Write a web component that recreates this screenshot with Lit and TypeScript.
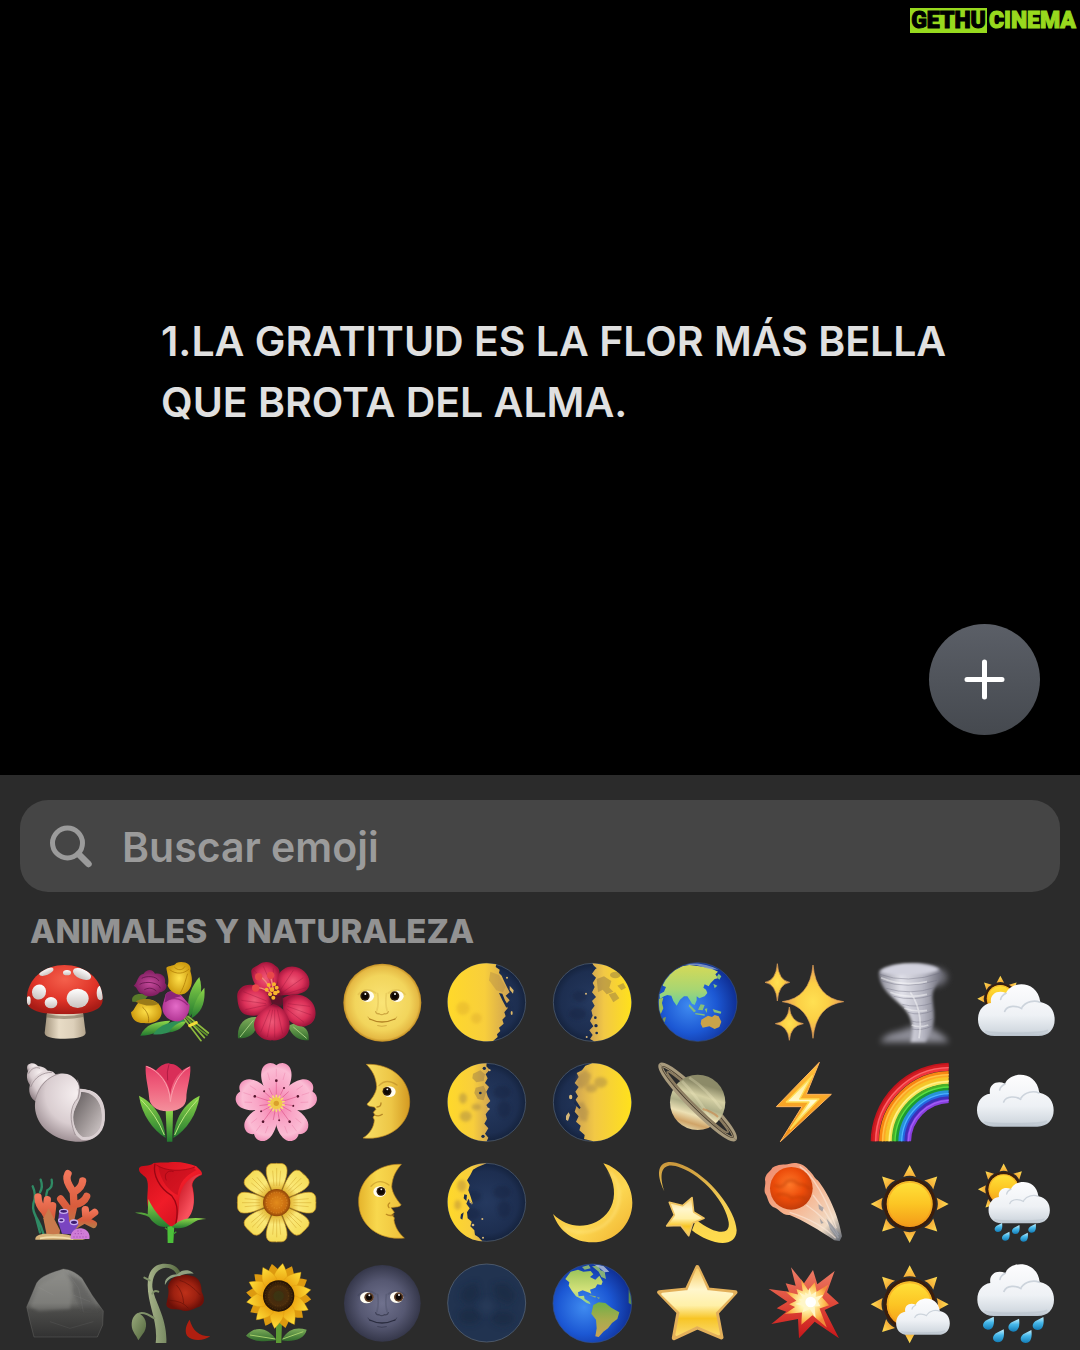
import { LitElement, html, svg, css } from "lit";
import { customElement } from "lit/decorators.js";

type Art = ReturnType<typeof svg>;
interface Emoji {
  name: string;
  art: Art;
}

/* ---------- shared gradients ---------- */

const linear = (id: string, stops: [number, string][], x2 = 0, y2 = 1) => svg`
  <linearGradient id=${id} x1="0" y1="0" x2=${x2} y2=${y2}>
    ${stops.map(([o, c]) => svg`<stop offset=${o} stop-color=${c}></stop>`)}
  </linearGradient>`;

const radial = (id: string, stops: [number, string][], cx = 0.5, cy = 0.5, r = 0.5) => svg`
  <radialGradient id=${id} cx=${cx} cy=${cy} r=${r}>
    ${stops.map(([o, c]) => svg`<stop offset=${o} stop-color=${c}></stop>`)}
  </radialGradient>`;

const defs = svg`
  ${radial("cap", [[0, "#f4604c"], [0.6, "#e03428"], [1, "#a81c16"]], 0.5, 0.3, 0.65)}
  ${linear("stem", [[0, "#a4957e"], [0.35, "#e8dcc6"], [0.7, "#ddd0ba"], [1, "#b3a48c"]], 1, 0)}
  ${linear("spot", [[0, "#ffffff"], [1, "#c9c2bf"]])}
  ${radial("plum", [[0, "#c64a9c"], [1, "#7d1c5e"]])}
  ${radial("pinkRose", [[0, "#e46cc8"], [1, "#b23694"]])}
  ${radial("goldRose", [[0, "#ffe14a"], [1, "#cf9c10"]])}
  ${linear("leaf", [[0, "#8fd84a"], [1, "#237a30"]])}
  ${linear("leafDark", [[0, "#7fae5a"], [1, "#2f6a2c"]])}
  ${linear("leafPale", [[0, "#9aaa7c"], [1, "#51653c"]], 1, 1)}
  ${radial("hib", [[0, "#ef5a78"], [0.6, "#dc3159"], [1, "#a3153c"]])}
  ${radial("face", [[0, "#fae476"], [0.7, "#f2d55c"], [0.93, "#e5b944"], [1, "#c08c24"]])}
  ${linear("faceEdge", [[0, "#f8df66"], [0.6, "#edc646"], [1, "#d49a22"]], 1, 0)}
  ${linear("faceEdgeL", [[0, "#e5b42c"], [0.4, "#f8d84e"], [1, "#eec03a"]], 1, 0)}
  ${radial("night", [[0, "#25395f"], [0.8, "#1d2e50"], [1, "#15233e"]])}
  ${linear("litL", [[0, "#ffd92a"], [0.6, "#f8ce3c"], [1, "#cfa353"]], 1, 0)}
  ${linear("litR", [[0, "#cfa353"], [0.35, "#f2c845"], [1, "#ffe11c"]], 1, 0)}
  ${radial("sea", [[0, "#3f8bf0"], [0.55, "#1c58d4"], [1, "#0e2c90"]], 0.4, 0.55, 0.62)}
  ${linear("asia", [[0, "#d5d957"], [0.6, "#a8d672"], [1, "#6ccf9a"]])}
  ${linear("america", [[0, "#9cc45a"], [0.6, "#d4e27a"], [1, "#8fd08a"]])}
  ${linear("south", [[0, "#6fae48"], [0.5, "#a8ac4c"], [1, "#c8a258"]])}
  ${radial("spark", [[0, "#ffe052"], [0.5, "#fbcf45"], [1, "#e79a5a"]])}
  ${linear("twister", [[0, "#8a8a96"], [0.35, "#e2e2ea"], [0.7, "#b8b8c4"], [1, "#6e6e7a"]], 1, 0)}
  ${linear("cloud", [[0, "#fdfdfe"], [0.6, "#eef1f5"], [0.9, "#d3dae1"], [1, "#b8c2cc"]])}
  ${linear("sun", [[0, "#ffe23a"], [0.5, "#fcc524"], [1, "#f39a18"]])}
  ${linear("ray", [[0, "#ffdf55"], [1, "#f4a935"]])}
  ${linear("drop", [[0, "#c8f2ff"], [0.45, "#46b8ea"], [1, "#127cb6"]])}
  ${radial("shell", [[0, "#f6eff0"], [0.6, "#d9cdd0"], [1, "#94858a"]], 0.6, 0.3, 0.75)}
  ${linear("shellIn", [[0, "#5c5657"], [0.6, "#a49c9c"], [1, "#d5cdcd"]], 1, 1)}
  ${linear("tulip", [[0, "#e63c66"], [0.5, "#f0647f"], [1, "#f4909c"]])}
  ${radial("cherry", [[0, "#f57fae"], [0.4, "#f9a5c6"], [0.8, "#fbbcd4"], [1, "#f190b8"]], 0.5, 0.9, 0.95)}
  ${linear("saturn", [[0, "#8c8a68"], [0.2, "#d5d0a4"], [0.38, "#b0b089"], [0.55, "#ece0b4"], [0.7, "#d0a468"], [0.82, "#e0d3a6"], [1, "#8a7a58"]], -0.3, 1)}
  ${linear("bolt", [[0, "#ffc23c"], [1, "#f08a12"]])}
  ${linear("boltIn", [[0, "#ffe680"], [0.5, "#fffbd2"], [1, "#ffd84a"]])}
  ${linear("coral", [[0, "#f2765a"], [0.6, "#d85c3c"], [1, "#b67a48"]])}
  ${linear("rose", [[0, "#c80c18"], [0.5, "#f01c28"], [1, "#c00a1c"]], 1, 1)}
  ${linear("roseR", [[0, "#b80614"], [1, "#f8505c"]], 0.6, 0.6)}
  ${linear("daisy", [[0, "#f5dc58"], [0.6, "#fbe978"], [1, "#d8a21c"]])}
  ${radial("daisyEye", [[0, "#e28b1c"], [0.7, "#c96d10"], [1, "#8f4608"]])}
  ${radial("seeds", [[0, "#3a2a10"], [0.6, "#4a2c0c"], [1, "#231204"]])}
  ${linear("sunPetal", [[0, "#ffe03a"], [1, "#e89c0c"]])}
  ${linear("rock", [[0, "#8c8c88"], [0.5, "#6e6e6b"], [0.6, "#4c4c4a"], [1, "#323232"]])}
  ${linear("wilt", [[0, "#a8b48a"], [0.5, "#7f9068"], [1, "#56683e"]], 1, 0)}
  ${radial("dead", [[0, "#bd3019"], [0.6, "#9e2110"], [1, "#6c1008"]])}
  ${radial("dusk", [[0, "#70728e"], [0.6, "#565872"], [1, "#35374a"]])}
  ${linear("crescent", [[0, "#f2b62e"], [0.6, "#fcd752"], [1, "#f0b02c"]], 1, 1)}
  ${radial("ember", [[0, "#ff7a2a"], [0.6, "#ec4c0a"], [1, "#c23c0a"]], 0.45, 0.4, 0.6)}
  ${linear("tail", [[0, "#ee8a6e"], [0.45, "#f6b08a"], [0.8, "#f0dcc6"], [1, "#5c6470"]], 1, 1)}
  ${linear("star", [[0, "#f8cf6c"], [0.3, "#fff6cc"], [0.55, "#fff0a8"], [0.75, "#f7c526"], [1, "#fbd96a"]])}
  ${linear("swoosh", [[0, "#c9963c"], [0.5, "#f5cf55"], [1, "#ffdc4c"]])}
  ${linear("blast", [[0, "#ec7f68"], [0.5, "#e04a3a"], [1, "#c8161a"]])}
  ${radial("blastIn", [[0, "#ffffff"], [0.35, "#fff3a8"], [0.8, "#fdb94e"], [1, "#f08a3a"]])}
  <filter id="soft" x="-20%" y="-20%" width="140%" height="140%"><feGaussianBlur stdDeviation="4"></feGaussianBlur></filter>
  <filter id="haze" x="-40%" y="-40%" width="180%" height="180%"><feGaussianBlur stdDeviation="9"></feGaussianBlur></filter>
`;

/* ---------- reusable pieces ---------- */

const spin = (n: number, cx: number, cy: number, part: Art, from = 0) =>
  Array.from({ length: n }, (_, i) => svg`
    <g transform="translate(${cx} ${cy}) rotate(${from + (i * 360) / n})">${part}</g>`);

const cloud = (dx: number, dy: number, s = 1) => svg`
  <g transform="translate(${dx} ${dy}) scale(${s})">
    <path fill="url(#cloud)" d="M402 515C368 515 352 491 352 466C352 438 368 419 391 416C386 388 412 375 436 386C452 348 531 346 539 413C570 419 582 441 582 466C582 494 564 515 533 515Z"/>
    <g fill="none" stroke="#c0c9d3" stroke-width="5" stroke-linecap="round" opacity=".75">
      <path d="M432 441C440 421 470 424 483 433"/><path d="M484 429C496 411 522 406 538 414"/><path d="M436 387C426 392 421 399 420 405"/>
    </g>
    <path d="M374 500C395 509 540 509 562 498" fill="none" stroke="#b4bec9" stroke-width="5" opacity=".4"/>
  </g>`;

const sun = (cx: number, cy: number, s = 1) => svg`
  <g transform="translate(${cx} ${cy}) scale(${s})">
    <circle r="79" fill="#3a1d0d"/>
    ${spin(8, 0, 0, svg`<path d="M-19 -81Q0 -88 19 -81L0 -117Z" fill="url(#ray)"/>`)}
    <circle r="69" fill="url(#sun)"/>
    <circle r="66" fill="none" stroke="#f2961c" stroke-width="5" opacity=".55"/>
  </g>`;

const drop = (x: number, y: number, s = 1) => svg`
  <path transform="translate(${x} ${y}) scale(${s})" fill="url(#drop)" d="M17 -21C20 0 17 20 -2 20C-22 18 -21 -4 -3 -11Z"/>`;

const eye = (x: number, y: number, px: number, r = 1, iris = "#2a1808") => svg`
  <ellipse cx=${x} cy=${y} rx=${20 * r} ry=${17 * r} fill="#fffdf2"/>
  <circle cx=${x + px} cy=${y - 1} r=${14 * r} fill=${iris}/>
  <circle cx=${x + px} cy=${y - 1} r=${9 * r} fill="#0c0603"/>
  <circle cx=${x + px + 1} cy=${y - 7} r=${3 * r} fill="#fff"/>`;

const smile = (x: number, y: number, line: string) => svg`
  <g fill="none" stroke=${line} stroke-linecap="round">
    <path stroke-width="4" opacity=".85" d="M${x - 36} ${y + 48}Q${x} ${y + 66} ${x + 40} ${y + 48}"/>
    <path stroke-width="3" opacity=".45" d="M${x - 41} ${y + 42}Q${x - 39} ${y + 48} ${x - 34} ${y + 50}M${x + 45} ${y + 42}Q${x + 43} ${y + 48} ${x + 38} ${y + 50}M${x - 12} ${y + 68}Q${x} ${y + 72} ${x + 14} ${y + 68}"/>
    <path stroke-width="4" opacity=".5" d="M${x - 18} ${y + 26}Q${x - 16} ${y + 34} ${x - 8} ${y + 32}Q${x} ${y + 38} ${x + 8} ${y + 32}Q${x + 18} ${y + 34} ${x + 20} ${y + 26}"/>
    <path stroke-width="5" opacity=".16" d="M${x - 12} ${y - 28}Q${x - 8} ${y} ${x - 14} ${y + 22}M${x + 14} ${y - 28}Q${x + 10} ${y} ${x + 16} ${y + 22}M${x - 70} ${y - 26}Q${x - 46} ${y - 50} ${x - 18} ${y - 30}M${x + 20} ${y - 30}Q${x + 46} ${y - 50} ${x + 70} ${y - 26}"/>
  </g>`;

const moon = (cx: number, cy: number, lit: string, fill: string, marks: Art) => svg`
  <circle cx=${cx} cy=${cy} r="117" fill="url(#night)" stroke="#53647a" stroke-width="2"/>
  <g fill="#16243f" opacity=".4" filter="url(#soft)">
    <ellipse cx=${cx - 38} cy=${cy - 18} rx="22" ry="17"/><ellipse cx=${cx + 46} cy=${cy - 30} rx="26" ry="20"/>
    <ellipse cx=${cx + 52} cy=${cy + 20} rx="20" ry="26"/><ellipse cx=${cx - 44} cy=${cy + 34} rx="26" ry="18"/>
  </g>
  <path d=${lit} fill="url(#${fill})"/>
  ${marks}`;

const sparkle = (cx: number, cy: number, rx: number, ry: number) => {
  const q = 0.1;
  return svg`<path fill="url(#spark)" d="M${cx} ${cy - ry}Q${cx + rx * q} ${cy - ry * q} ${cx + rx} ${cy}Q${cx + rx * q} ${cy + ry * q} ${cx} ${cy + ry}Q${cx - rx * q} ${cy + ry * q} ${cx - rx} ${cy}Q${cx - rx * q} ${cy - ry * q} ${cx} ${cy - ry}Z" stroke="#dfa058" stroke-width="2" stroke-linejoin="round"/>`;
};

/* ---------- the drawings, row by row ---------- */

const mushroom = svg`
  <path d="M112 165L104 233Q104 251 165 251Q228 251 227 233L218 165Z" fill="url(#stem)"/>
  <path d="M109 176Q165 190 221 176L220 186Q165 198 108 187Z" fill="#6e5f4a" opacity=".5"/>
  <clipPath id="capClip"><path d="M50 136C50 66 108 30 163 30C222 30 279 68 278 136C276 168 236 178 165 178C90 178 52 168 50 136Z"/></clipPath>
  <g clip-path="url(#capClip)">
    <rect x="45" y="25" width="240" height="160" fill="url(#cap)"/>
    <g fill="url(#spot)">
      <ellipse cx="109" cy="50" rx="23" ry="10" transform="rotate(-22 109 50)"/><ellipse cx="171" cy="53" rx="12" ry="8"/>
      <ellipse cx="216" cy="57" rx="29" ry="15" transform="rotate(24 216 57)"/><ellipse cx="87" cy="111" rx="21" ry="23" transform="rotate(20 87 111)"/>
      <ellipse cx="123" cy="143" rx="19" ry="17"/><ellipse cx="203" cy="130" rx="33" ry="29"/>
      <ellipse cx="271" cy="114" rx="11" ry="22"/><ellipse cx="56" cy="137" rx="6" ry="13"/>
    </g>
  </g>`;

const bouquet = svg`
  <g fill="url(#leaf)">
    <path d="M536 172C530 125 548 92 569 66C582 106 572 146 540 186Z"/><path d="M545 190C550 150 564 122 584 98C588 142 576 172 545 190Z"/>
    <path d="M392 242C406 208 440 198 482 197C462 226 428 242 392 242Z"/><path d="M430 238C448 208 490 198 528 192C512 222 472 242 430 238Z" fill="#2f8f56"/>
    <path d="M368 140C362 118 390 112 415 122L400 142Z" fill="#5a7a2a"/><path d="M478 232C490 210 510 200 530 198C520 216 505 230 478 232Z"/>
  </g>
  <g stroke="#8dbb3e" stroke-width="5" fill="none" stroke-linecap="round">
    <path d="M520 186L574 257"/><path d="M528 186L584 248"/><path d="M535 184L596 234"/><path d="M524 180Q550 210 592 240" stroke="#5d9429"/>
  </g>
  <path d="M540 212L560 203" stroke="#f3dc38" stroke-width="9" stroke-linecap="round"/>
  <path d="M468 118C480 100 500 112 516 122L540 150C540 180 522 202 498 199C470 196 452 172 460 146Z" fill="url(#pinkRose)"/>
  <path d="M466 140C480 128 510 124 534 150" stroke="#8a1d70" stroke-width="4" fill="none" opacity=".7"/>
  <path d="M468 118C480 104 500 112 514 124C498 128 480 132 466 142Z" fill="#8a2478"/>
  <path d="M372 92C384 84 382 60 402 56C412 40 430 42 436 56C456 52 470 66 466 84C478 96 464 110 450 112C440 126 408 128 400 116C384 118 386 98 372 92Z" fill="url(#plum)"/>
  <path d="M396 70C410 62 440 62 448 78M390 88C410 76 450 84 452 100M404 104C420 96 430 100 440 108" stroke="#551040" stroke-width="3" fill="none" opacity=".7"/>
  <path d="M470 38C480 30 494 34 500 24C520 16 548 26 542 48C550 74 550 98 528 114C508 126 482 112 474 92C480 74 472 56 470 38Z" fill="url(#goldRose)"/>
  <path d="M480 44C500 60 524 56 538 42M494 36C504 48 520 46 526 34M512 114C526 90 528 72 534 56" stroke="#b07c06" stroke-width="3" fill="none" opacity=".75"/>
  <path d="M364 172C376 166 378 144 396 136C420 126 454 140 456 168C458 196 430 208 404 204C382 206 366 194 364 172Z" fill="url(#goldRose)"/>
  <path d="M378 140C392 128 424 128 448 146C424 156 402 152 378 140Z" fill="#9a7a18"/>
  <path d="M398 156C412 168 420 186 416 202" stroke="#9a6c08" stroke-width="3" fill="none" opacity=".7"/>`;

const hibiscus = svg`
  <path d="M684 250C680 208 704 184 740 186C744 218 736 250 684 250Z" fill="url(#leafDark)"/><path d="M896 256C898 226 888 212 850 206L834 212C846 246 866 256 896 256Z" fill="url(#leafDark)"/>
  <path d="M690 246L730 196M890 250L850 216" stroke="#a6d080" stroke-width="3"/>
  <g fill="url(#hib)">
    <path d="M724 52C722 36 742 34 748 28C764 16 786 22 796 32C812 40 810 60 806 72L790 118C760 126 726 92 724 52Z"/>
    <path d="M804 62C814 40 838 30 858 36C884 42 902 66 898 90C894 112 866 120 836 120L798 122Z"/>
    <path d="M682 130C678 104 700 86 728 90C760 94 778 120 786 146C764 176 738 188 712 180C690 176 684 156 682 130Z"/>
    <path d="M818 130C842 112 886 114 906 142C924 166 920 204 890 212C866 222 834 202 820 172Z"/>
    <path d="M790 146C820 154 844 188 838 220C834 246 812 258 786 256C758 258 732 238 732 208C734 178 764 160 790 146Z"/>
  </g>
  <path d="M788 92C810 98 826 128 818 150C806 158 786 154 778 140Z" fill="#6d0e2a" opacity=".8" filter="url(#soft)"/>
  <g fill="none" stroke="#8d1236" stroke-width="2" opacity=".5">
    <path d="M700 110L770 138M694 136L768 146M706 164L770 150M730 44L778 92M760 34L784 88M790 40L790 84M850 46L812 104M880 68L818 112M888 98L824 118M900 154L834 146M904 180L832 154M882 202L830 162M752 232L780 164M772 246L788 164M794 248L794 164M818 236L802 164"/>
  </g>
  <path d="M746 62Q770 76 784 108M738 98Q762 96 786 118M782 62L790 104" stroke="#f08a7a" stroke-width="4" fill="none"/>
  <g fill="#e8484a"><circle cx="746" cy="65" r="11"/><circle cx="782" cy="61" r="11"/><circle cx="737" cy="99" r="11"/></g>
  <g fill="#f7b52c"><circle cx="776" cy="90" r="6"/><circle cx="792" cy="88" r="6"/><circle cx="770" cy="104" r="6"/><circle cx="786" cy="104" r="7"/><circle cx="800" cy="98" r="6"/><circle cx="780" cy="118" r="6"/><circle cx="796" cy="114" r="7"/><circle cx="790" cy="128" r="6"/><circle cx="804" cy="110" r="5"/></g>`;

const fullMoonFace = svg`
  <circle cx="156" cy="143" r="117" fill="url(#face)"/>
  ${smile(154, 144, "#a8761a")}${eye(111, 124, -7)}${eye(200, 124, -7)}`;

const gibbousWaning = moon(471, 142, "M471 25C406 25 354 77 354 142C354 207 406 259 471 259L490 258L504 246L502 238L512 228L508 218L522 206L518 194L528 184L524 172L534 160L530 146L540 136L528 122L540 112L530 92L522 76L516 62L508 54L510 44L498 36L500 28Z", "litL", svg`
  <path d="M508 114L518 116L526 136L536 152L530 158L518 136Z" fill="#1b2c4e"/>
  <g fill="#ddb868"><path d="M540 92L552 106L550 116L540 104Z"/><ellipse cx="546" cy="174" rx="3" ry="6"/><circle cx="532" cy="68" r="3"/></g>
  <g fill="#a58047" opacity=".35"><path d="M482 50L508 60L528 96L520 112L500 106L478 76Z"/></g>
  <g fill="#d09c2c" opacity=".3" filter="url(#soft)"><circle cx="440" cy="190" r="16"/><circle cx="400" cy="160" r="20"/></g>`);

const firstQuarter = moon(787, 142, "M787 25L800 26C858 30 904 80 904 142C904 205 856 256 792 259L780 252L788 240L778 226L790 214L780 198L788 182L784 166L794 152L786 138L798 126L786 112L794 96L788 84L798 68L786 56L796 42Z", "litR", svg`
  <g fill="#8c7344" opacity=".45"><path d="M800 72L822 64L844 78L838 98L850 110L830 118L818 104L804 112Z"/><path d="M836 118L856 112L868 130L850 142Z"/><path d="M862 92L880 84L888 98L874 106Z"/><ellipse cx="856" cy="60" rx="16" ry="10"/></g>
  <g fill="#1b2c4e"><path d="M786 28L800 40L790 46Z"/><circle cx="796" cy="188" r="4"/><circle cx="798" cy="212" r="5"/><circle cx="800" cy="234" r="4"/></g>
  <g fill="#d8b878"><circle cx="768" cy="116" r="3"/><circle cx="770" cy="246" r="3"/></g>`);

const globeAsia = svg`
  <clipPath id="g1"><circle cx="175" cy="141" r="117"/></clipPath>
  <circle cx="175" cy="141" r="118" fill="url(#sea)" stroke="#34528c" stroke-width="2"/>
  <g clip-path="url(#g1)">
    <path fill="url(#asia)" d="M70 92L76 66L100 48L128 34L150 30L180 34L214 40L236 50L228 58L236 70L226 72L214 84L208 94L196 88L192 98L200 104L204 114L196 124L180 130L172 124L172 136L166 150L158 146L152 136L144 124L134 124L122 134L112 152L102 138L96 122L84 120L74 124L62 132L60 118L74 110L80 96Z"/>
    <path fill="#9fbf58" d="M58 132L72 128L68 144L72 160L64 178L58 168Z"/>
    <path fill="#8fa2c8" d="M120 30Q180 14 238 44L210 42L170 30Z" opacity=".8"/>
    <path fill="#86c078" d="M238 56L246 64L240 74L232 66ZM222 86L234 92L226 100ZM150 148L170 168L164 172L148 154ZM184 148L196 150L190 166L176 164ZM168 174L196 178L196 182L168 178ZM196 162L204 160L202 174ZM220 162L246 170L244 176L224 172Z"/>
    <path fill="#c9a349" d="M186 194L206 182L218 186L226 180L238 184L246 200L240 216L226 222L210 214L190 218L184 206Z"/>
    <path fill="#7d9a58" d="M72 188L80 186L76 202L70 198Z"/>
  </g>`;

const sparkles = svg`${sparkle(520, 140, 92, 110)}${sparkle(413, 82, 37, 56)}${sparkle(449, 206, 42, 50)}`;

const tornado = svg`
  <path d="M60 262C80 225 120 235 150 215L210 215C235 235 255 240 265 262Z" fill="#b6b6c4" opacity=".7" filter="url(#haze)"/>
  <ellipse cx="225" cy="66" rx="36" ry="28" fill="#8a8a98" opacity=".7" filter="url(#haze)"/>
  <path d="M56 52C74 22 218 14 240 46C256 66 216 92 216 124C216 160 232 190 208 238L196 261L150 261C162 226 158 186 126 154C90 122 56 98 56 52Z" fill="url(#twister)" filter="url(#soft)"/>
  <path d="M58 50C80 24 210 20 236 44C214 62 88 66 58 50Z" fill="#d2d2de" filter="url(#soft)"/>
  <g fill="none" stroke="#6e6e80" stroke-width="3" opacity=".4"><path d="M58 58Q140 88 240 54M64 78Q140 104 230 76M78 100Q150 122 222 98M100 124Q160 140 217 120M126 148Q170 160 217 144M142 172Q180 184 220 166M152 198Q186 208 220 190M154 222Q184 228 214 214"/></g>
  <g fill="none" stroke="#fff" stroke-width="5" opacity=".45"><path d="M62 68Q130 96 200 80M90 112Q140 132 200 118M132 160Q165 172 200 166M154 210Q176 220 204 210"/><path d="M150 112Q190 170 176 250"/></g>`;

const sunBehindCloud = svg`${sun(422, 131, 0.59)}${cloud(3, -272)}`;

const shell = svg`
  <path d="M60 326C48 328 50 344 56 352L88 340C82 326 68 322 60 326Z" fill="url(#shell)"/>
  <path d="M54 348C46 366 54 388 66 396L114 350C104 330 66 328 54 348Z" fill="url(#shell)"/>
  <path d="M62 384C52 406 60 432 80 440L140 366C132 334 80 344 62 384Z" fill="url(#shell)"/>
  <path d="M80 420C92 370 150 342 184 362C204 376 210 392 208 406C262 396 290 440 284 490C278 536 248 562 208 560C150 560 92 530 78 476C72 452 76 436 80 420Z" fill="url(#shell)"/>
  <path d="M208 406C212 430 196 450 190 476C186 504 196 532 218 546C250 552 278 520 276 480C276 440 250 408 208 406Z" fill="url(#shellIn)"/>
  <path d="M208 406C214 428 192 446 186 476C182 506 194 536 216 550C256 556 284 524 280 478C278 436 250 404 208 406Z" fill="none" stroke="#d9cfd1" stroke-width="9"/>
  <g fill="none" stroke="#8c7e83" stroke-width="3" opacity=".65"><path d="M56 356C62 342 76 334 90 340M62 396C74 366 98 352 126 352M76 434C86 394 112 366 148 356M202 374C212 396 208 414 204 430C178 452 178 500 196 540"/></g>`;

const tulip = svg`
  <path d="M468 465H490L488 560H472Z" fill="url(#leaf)"/>
  <path d="M388 422C424 440 462 478 468 549C430 524 396 480 388 422Z" fill="url(#leaf)"/><path d="M570 422C534 440 496 478 491 549C530 524 562 480 570 422Z" fill="url(#leaf)"/>
  <path d="M394 434Q440 480 464 540M564 434Q520 480 495 540" stroke="#c0e880" stroke-width="3" fill="none"/>
  <path d="M436 350C450 330 474 322 480 326C496 326 510 336 520 350L500 440H456Z" fill="#d92e58"/>
  <path d="M408 332C440 338 478 376 482 420C486 376 512 342 542 334C544 370 530 400 530 430C530 456 504 469 474 469C440 469 418 452 418 424C416 396 406 366 408 332Z" fill="url(#tulip)"/>
  <path d="M410 334C446 346 480 384 482 440C488 392 510 352 540 336" stroke="#f9a0ac" stroke-width="3" fill="none"/>
  <path d="M478 328Q470 350 474 376" stroke="#b01c44" stroke-width="3" fill="none"/>`;

const cherryBlossom = svg`
  ${spin(5, 799, 445, svg`<path d="M0 0C-24 -20 -50 -60 -45 -94C-42 -118 -18 -130 0 -114C18 -130 42 -118 45 -94C50 -60 24 -20 0 0Z" fill="url(#cherry)"/><path d="M0 -20V-66M-10 -20L-22 -46M10 -20L22 -46" stroke="#d4447c" stroke-width="2" opacity=".7"/><path d="M0 -80V-104M-20 -70L-26 -92M20 -70L26 -92" stroke="#e0568c" stroke-width="2" opacity=".35"/><circle cy="-68" r="4" fill="#54142c"/><circle cx="23" cy="-46" r="3" fill="#54142c"/>`)}
  ${spin(14, 799, 445, svg`<path d="M0 0V-24" stroke="#f6dc72" stroke-width="5" stroke-linecap="round"/>`)}
  <circle cx="799" cy="445" r="18" fill="#f0c94a"/><circle cx="799" cy="445" r="8" fill="#d9a02c"/>`;

const quarterFaceRight = svg`
  <path fill="url(#faceEdge)" stroke="#c08a20" stroke-width="2" d="M108 328C185 325 238 375 238 440C238 510 175 557 98 549C120 535 131 515 132 495L128 486L134 480L129 472L137 463L132 456C125 455 112 455 110 447C122 435 138 415 139 395C137 365 125 345 108 328Z"/>
  ${eye(177, 410, -7, 0.95)}
  <g fill="none" stroke="#a8761a" stroke-width="4" stroke-linecap="round"><path d="M146 392Q168 368 200 390" opacity=".45"/><path d="M132 480Q146 486 156 478M140 456Q152 456 152 444" opacity=".8"/></g>`;

const lastQuarter = moon(471, 442, "M471 325C406 325 354 377 354 442C354 507 406 559 471 559L476 548L466 536L476 520L464 506L472 492L468 478L478 464L470 450L482 438L474 424L470 410L478 396L466 384L474 370L468 358L480 344L470 334Z", "litL", svg`
  <g fill="#94784a" opacity=".45"><path d="M430 356L452 346L466 358L462 378L440 382L428 370Z"/><path d="M438 398L462 392L470 410L462 436L444 432L434 414Z"/></g>
  <g fill="#94784a" opacity=".4" filter="url(#soft)"><ellipse cx="408" cy="484" rx="18" ry="16"/><ellipse cx="400" cy="430" rx="12" ry="16"/><ellipse cx="440" cy="456" rx="14" ry="10"/></g>
  <g fill="#1b2c4e"><circle cx="452" cy="414" r="4"/><circle cx="464" cy="340" r="5"/><circle cx="460" cy="544" r="5"/></g><g fill="#d8b878"><circle cx="480" cy="346" r="3"/><circle cx="476" cy="462" r="4"/></g>`);

const gibbousWaxing = moon(787, 442, "M787 325C852 325 904 377 904 442C904 507 852 559 790 559L762 552L764 540L748 526L752 512L738 500L746 484L734 470L740 452L734 438L744 424L736 410L746 396L734 384L746 366L740 354L756 346L766 332Z", "litR", svg`
  <g fill="#957848" opacity=".4" filter="url(#soft)"><path d="M742 362L766 344L784 360L776 386L752 402L740 390Z"/><ellipse cx="812" cy="382" rx="20" ry="16"/><ellipse cx="784" cy="400" rx="18" ry="12"/><path d="M738 446L760 440L776 470L770 500L750 496Z"/></g>
  <path d="M734 430L752 458L748 462L732 446Z" fill="#1b2c4e"/>
  <g fill="#d8b878"><path d="M708 482L716 472L720 480L714 498L708 494Z"/><ellipse cx="722" cy="426" rx="5" ry="7"/></g>`);

const ringHalf = (sweep: number) => svg`
  <g transform="translate(175 441) rotate(45)" fill="none">
    <path d="M-156 0A156 23 0 0 ${sweep} 156 0" stroke="#a89a7c" stroke-width="14"/>
    <path d="M-150 0A150 19 0 0 ${sweep} 150 0" stroke="#4e4232" stroke-width="3"/>
    <path d="M-128 0A128 13 0 0 ${sweep} 128 0" stroke="#8c7c60" stroke-width="6"/>
  </g>`;
const saturn = svg`${ringHalf(1)}<circle cx="175" cy="442" r="83" fill="url(#saturn)"/>
  <g fill="none" stroke="#f3ebc4" stroke-width="8" opacity=".3"><path d="M150 368Q200 400 246 462M128 378Q170 420 220 500"/></g>
  <path d="M190 462Q220 470 236 486" stroke="#c9722e" stroke-width="6" opacity=".45" fill="none"/>${ringHalf(0)}`;

const bolt = svg`
  <path d="M539 322L500 418H575L422 560L487 455H410Z" fill="url(#bolt)" stroke="#ffb35c" stroke-width="3" stroke-linejoin="round"/>
  <path d="M518 362L480 432H538L452 522L508 441H440Z" fill="url(#boltIn)" stroke="#ffdb50" stroke-width="4" stroke-linejoin="round"/>`;

const bands: [number, string][] = [[228, "#d31c22"], [221, "#f0343a"], [208, "#f98512"], [200, "#fca823"], [190, "#f6c62a"], [180, "#f8e45a"], [170, "#48b028"], [160, "#1c9a30"], [150, "#2893d8"], [141, "#2468e0"], [132, "#3f2fb8"], [124, "#8a3fe0"]];
const rainbow = svg`
  <clipPath id="bow"><rect x="29" y="321" width="236" height="238"/></clipPath>
  <g clip-path="url(#bow)" fill="none" stroke-width="12">
    <circle cx="270" cy="562" r="233" stroke="#c0141e"/>
    ${bands.map(([r, c]) => svg`<circle cx="270" cy="562" r=${r} stroke=${c}/>`)}
    <circle cx="270" cy="562" r="224" stroke="#ff7a80" stroke-width="4" opacity=".7"/><circle cx="270" cy="562" r="203" stroke="#ffc04a" stroke-width="4"/><circle cx="270" cy="562" r="183" stroke="#fff08a" stroke-width="4"/><circle cx="270" cy="562" r="166" stroke="#58e040" stroke-width="4"/><circle cx="270" cy="562" r="146" stroke="#4ab4ff" stroke-width="4"/><circle cx="270" cy="562" r="126" stroke="#a060f8" stroke-width="4"/>
  </g>`;

const coral = svg`
  <g fill="none" stroke="#2f8a64" stroke-width="7" stroke-linecap="round"><path d="M68 94Q80 120 70 146Q66 170 84 196Q94 214 100 236M92 74Q100 96 90 112M125 74Q130 96 112 106Q104 130 112 160M76 180L90 232"/></g>
  <g fill="none" stroke="url(#coral)" stroke-width="22" stroke-linecap="round" stroke-linejoin="round">
    <path d="M174 56Q166 72 178 92L190 112L192 150L176 220M218 78Q216 98 192 112M230 124Q222 144 192 150M152 132L176 164"/>
    <path d="M84 126Q84 150 104 170L132 222M112 134L108 168M128 152L124 186"/>
    <path d="M254 172L230 190L186 216M250 208L226 196M226 164L228 190"/>
  </g>
  <path d="M100 190L116 160L150 226L148 240H110Z" fill="#c97a4c"/>
  <path d="M76 254C74 240 96 232 130 238Q160 232 190 244L226 254Z" fill="#d6b27a"/><path d="M90 250Q130 242 190 252" stroke="#f2dcaa" stroke-width="5" fill="none"/>
  <path d="M148 168L174 166L178 202L192 196L206 208L186 238L156 236L144 200Z" fill="#7a44c0"/>
  <g fill="#3c1a70" stroke="#c9aef0" stroke-width="4"><ellipse cx="161" cy="169" rx="12" ry="6"/><ellipse cx="192" cy="202" rx="11" ry="7"/><ellipse cx="154" cy="196" rx="8" ry="5"/></g>
  <path d="M182 252C180 226 200 218 214 220C232 222 242 238 238 252Z" fill="#cf7cd6"/><path d="M194 236H222M190 246H230M202 228H216" stroke="#a850b4" stroke-width="3" stroke-dasharray="4 5"/>`;

const rose = svg`
  <path d="M473 210H494L491 264H474Z" fill="#4cc03a"/><path d="M474 224L466 218M492 236L500 230" stroke="#3aa02e" stroke-width="4"/>
  <path d="M388 40C394 28 420 36 432 24C450 20 468 24 480 22C506 18 534 24 560 34C572 46 580 52 576 60C560 66 548 76 548 92C560 140 550 190 500 214C450 216 418 190 414 150C410 120 420 90 410 70C400 58 386 54 388 40Z" fill="url(#rose)"/>
  <path d="M576 56C548 60 512 84 508 140C508 170 504 196 498 214C550 196 562 150 546 92C546 76 560 64 576 56Z" fill="url(#roseR)"/>
  <path d="M436 26C428 60 450 100 486 122C500 140 508 160 498 208" stroke="#9a0613" stroke-width="4" fill="none"/>
  <path d="M446 32C474 48 516 50 552 38L560 46C528 60 508 84 504 120C480 110 452 80 446 32Z" fill="#a80816" opacity=".4"/>
  <path d="M440 30C470 50 520 50 556 36M470 76C460 56 476 44 492 50" stroke="#9a0613" stroke-width="3" fill="none" opacity=".7"/>
  <path d="M416 132C428 160 452 190 482 214C450 222 430 204 418 186C410 180 392 178 376 173C396 172 408 174 414 178Z" fill="url(#leaf)"/>
  <path d="M486 216C508 194 540 184 590 192C560 192 552 204 540 210C520 222 500 222 486 216Z" fill="url(#leaf)"/>`;

const daisy = svg`
  ${spin(8, 800, 143, svg`<path d="M-10 -30C-26 -60 -38 -98 -27 -111C-18 -121 -8 -116 0 -118C8 -116 18 -121 27 -111C38 -98 26 -60 10 -30Z" fill="url(#daisy)" stroke="#c89420" stroke-width="2"/><path d="M-8 -50L-12 -96M0 -50V-104M8 -50L12 -96" stroke="#c99a20" stroke-width="2" opacity=".6" fill="none"/>`)}
  <circle cx="800" cy="143" r="41" fill="url(#daisyEye)"/><circle cx="800" cy="143" r="31" fill="none" stroke="#f0a83a" stroke-width="4" stroke-dasharray="3 5" opacity=".4"/><circle cx="800" cy="143" r="17" fill="none" stroke="#f0a83a" stroke-width="4" stroke-dasharray="3 5" opacity=".4"/>`;

const quarterFaceLeft = svg`
  <path fill="url(#faceEdgeL)" stroke="#c08a20" stroke-width="2" d="M213 28C140 25 85 75 85 140C85 210 145 257 222 249C205 235 194 215 191 196L192 188L184 180L192 172L182 158C195 156 211 156 212 149C200 135 186 115 184 95C186 65 198 45 213 28Z"/>
  ${eye(148, 110, 4, 0.95)}
  <g fill="none" stroke="#b07a18" stroke-width="4" stroke-linecap="round"><path d="M122 94Q146 68 176 90" opacity=".45"/><path d="M190 180Q176 184 168 178M176 158Q170 150 178 144" opacity=".8"/></g>`;

const crescentWaning = moon(471, 142, "M471 25C406 25 354 77 354 142C354 207 406 258 458 259L446 246L436 240L434 226L422 214L426 200L414 190L412 172L420 160L410 146L416 132L430 148L422 122L416 106L420 90L412 76L422 60L430 44L444 36Z", "litL", svg`
  <g fill="#1b2c4e"><path d="M404 118L412 120L410 138L402 130Z"/><path d="M394 178L402 172L398 194L392 190Z"/></g><g fill="#d8b878"><circle cx="458" cy="192" r="3"/><circle cx="430" cy="210" r="4"/><circle cx="460" cy="248" r="3"/><path d="M418 128L428 150L420 142Z"/></g>
  <g fill="#a57c3c" opacity=".4" filter="url(#soft)"><ellipse cx="396" cy="92" rx="14" ry="18"/><ellipse cx="384" cy="150" rx="10" ry="14"/></g>`);

const crescentMoon = svg`
  <path d="M820 25C870 40 907 88 907 143C907 210 852 262 787 262C733 262 688 230 669 177C698 206 734 218 772 210C848 194 882 112 820 25Z" fill="url(#crescent)"/>
  <path d="M840 50C884 100 874 170 822 210C784 236 736 238 700 216" fill="none" stroke="#ffe88a" stroke-width="8" opacity=".5" filter="url(#soft)"/>`;

const dizzyStar = svg`
  <path d="M75 109C36 30 74 6 130 30C210 62 290 166 292 226C290 286 206 266 158 226L170 194C226 238 274 244 268 202C260 142 190 62 124 38C74 18 54 44 75 109Z" fill="url(#swoosh)"/>
  <path d="M158 128L163 171L194 190L160 204L148 242L124 211L82 213L105 180L90 142L130 152Z" fill="url(#star)" stroke="#f0c460" stroke-width="5" stroke-linejoin="round"/>`;

const comet = svg`
  <path d="M376 74C376 56 392 50 398 38C416 26 432 30 450 26C470 20 494 28 506 44C520 56 522 66 534 76C564 112 596 180 607 244L600 258L584 256C540 226 490 196 450 180C426 182 418 160 400 156C384 146 386 130 378 118C370 104 380 90 376 74Z" fill="url(#tail)"/>
  <path d="M480 34C520 60 560 130 590 220M500 150Q560 190 596 248M450 172Q540 200 588 250M520 120Q560 170 596 240" fill="none" stroke="#fbe9dc" stroke-width="4" opacity=".6"/>
  <circle cx="455" cy="100" r="64" fill="url(#ember)"/>
  <path d="M404 90Q430 104 440 80Q462 70 476 88Q500 86 510 104M410 120Q440 112 456 130Q480 120 500 132" fill="none" stroke="#a83406" stroke-width="7" opacity=".45" filter="url(#soft)"/>
  <path d="M536 148L552 158L548 170L538 162ZM560 190L600 236L596 252L572 224ZM540 190L552 204L544 206Z" fill="#7a8494" opacity=".6"/>`;

const plainSun = sun(148, 147);

const sunRainCloud = svg`${sun(432, 103, 0.66)}${cloud(105, -207, 0.8)}
  ${[[416, 218], [468, 224], [517, 220], [438, 244], [493, 247]].map(([x, y]) => drop(x, y, 0.66))}`;

const rock = svg`
  <path d="M50 456L80 384C96 360 130 352 160 342C186 344 206 360 216 370L246 420L280 468L278 510L262 546H72L60 500Z" fill="url(#rock)" stroke="#7c7c7a" stroke-width="1" stroke-linejoin="round"/>
  <g filter="url(#soft)"><path d="M160 350L176 372L186 420L180 462L86 468L60 456L88 390Z" fill="#94948f" opacity=".4"/><path d="M172 356L190 390L188 410L214 466L266 468L240 422L212 376Z" fill="#4c4c4a" opacity=".4"/></g>
  <path d="M170 350L206 400L220 470M84 396L130 420M190 420L240 440M120 500L180 520L250 500" stroke="#b0b0aa" stroke-width="2" opacity=".15" fill="none"/>`;

const wiltedRose = svg`
  <path d="M438 564C446 500 414 450 414 390C414 340 440 326 466 326C490 326 508 338 512 354L500 358C496 346 484 338 468 338C438 342 428 366 428 396C434 440 474 490 470 564Z" fill="url(#wilt)"/>
  <path d="M404 368L420 376M428 416Q434 404 446 410M434 490C416 478 400 470 388 476" stroke="#7f9068" stroke-width="6" fill="none" stroke-linecap="round"/>
  <path d="M384 474C408 482 416 510 404 530L386 556C380 540 366 530 366 510C366 490 374 480 384 474Z" fill="url(#leafPale)"/>
  <path d="M478 384C488 362 520 354 544 362C572 366 576 392 576 410C588 432 586 452 560 458C544 466 528 472 512 464C494 464 470 464 470 448C474 428 480 408 474 396Z" fill="url(#dead)"/>
  <path d="M500 390Q520 410 522 446M480 436Q520 438 536 460M510 376Q540 384 572 420" stroke="#5e0e08" stroke-width="3" fill="none" opacity=".55"/>
  <path d="M466 390C462 370 484 358 502 358L516 348C532 343 546 348 552 356C534 354 520 358 510 363C490 364 474 372 466 390Z" fill="#90a080"/>
  <path d="M540 494C548 524 566 544 602 544C582 558 548 560 532 542C524 526 530 508 540 494Z" fill="#b01f10"/>`;

const sunflower = svg`
  <path d="M798 500H816L814 564H798Z" fill="#5c9a34"/>
  <path d="M800 556C776 520 740 508 708 542C738 566 776 558 800 556ZM814 556C836 518 862 516 890 524C884 552 850 562 814 556Z" fill="url(#leafDark)"/><path d="M720 540L796 552M880 530L818 552" stroke="#a6cf6a" stroke-width="3"/>
  ${spin(10, 806, 423, svg`<path d="M-20 -38C-30 -62 -14 -82 0 -98C14 -82 30 -62 20 -38Z" fill="#dd9a10"/>`, 24)}
  ${spin(10, 806, 423, svg`<path d="M-18 -36C-28 -60 -12 -80 2 -98C14 -80 26 -60 18 -36Z" fill="url(#sunPetal)" stroke="#d8960c" stroke-width="1"/>`, 6)}
  <circle cx="806" cy="423" r="47" fill="url(#seeds)"/><g fill="none" stroke="#7c5418" stroke-width="3" stroke-dasharray="3 5" opacity=".45"><circle cx="806" cy="423" r="40"/><circle cx="806" cy="423" r="30"/></g><circle cx="806" cy="423" r="16" fill="#3b3a14" opacity=".6"/>`;

const newMoonFace = svg`
  <circle cx="156" cy="445" r="115" fill="url(#dusk)"/>
  ${smile(154, 447, "#222436")}${eye(109, 428, 7, 1, "#5a3a22")}${eye(199, 427, 6, 1, "#5a3a22")}`;

const newMoon = svg`
  <circle cx="471" cy="444" r="117" fill="#213350" stroke="#5d6c80" stroke-width="2"/>
  <g fill="#18263e" opacity=".5" filter="url(#haze)"><path d="M400 400L440 380L450 420L420 450L390 430Z"/><path d="M490 390L530 384L560 420L540 450L500 430Z"/><ellipse cx="420" cy="484" rx="34" ry="24"/><ellipse cx="520" cy="490" rx="34" ry="22"/></g>
  <circle cx="470" cy="456" r="24" fill="#2d4262" opacity=".4" filter="url(#haze)"/>`;

const globeAmericas = svg`
  <clipPath id="g2"><circle cx="787" cy="445" r="117"/></clipPath>
  <circle cx="787" cy="445" r="118" fill="url(#sea)" stroke="#34528c" stroke-width="2"/>
  <g clip-path="url(#g2)">
    <path fill="url(#america)" d="M706 372L722 350L744 344L760 350L782 348L790 358L780 366L796 374L808 362L818 380L814 390L802 388L796 398L780 404L784 416L774 412L758 406L744 412L746 424L762 422L764 432L778 440L782 448L770 444L754 432L738 424L726 408L716 392L718 382Z"/>
    <path fill="#86b078" d="M756 336L776 330L782 340L764 344ZM786 334L804 332L812 346L824 350L828 372L814 366L806 350ZM776 420L798 424L796 428ZM800 426L810 428L806 432Z"/>
    <path fill="#bcc8dc" opacity=".8" d="M790 328L820 332L838 350L824 352L808 338Z"/>
    <path fill="url(#south)" d="M790 450L806 442L826 444L844 458L868 472L862 492L846 504L834 520L820 530L806 546L796 544L800 520L798 494L784 476Z"/>
    <path fill="#5c8a50" d="M896 404L906 410V450L896 444Z"/>
  </g>`;

const star = svg`<path d="M174 337L206 404L288 412L232 473L246 547L174 517L104 549L118 472L60 412L143 404Z" fill="url(#star)" stroke="#e3b05a" stroke-width="13" stroke-linejoin="round"/>
  <path d="M174 345L202 409L278 417L225 472L238 537L174 509L112 539L125 471L70 417L147 409Z" fill="url(#star)" stroke="url(#star)" stroke-width="8" stroke-linejoin="round"/>`;

const burst = "454,337 493,385 520,345 533,388 585,348 562,412 598,445 555,465 598,550 525,500 478,550 475,492 395,507 440,470 411,460 443,440 387,402 448,410 438,385 468,392";
const collision = svg`
  <polygon points=${burst} fill="url(#blast)"/>
  <polygon points=${burst} fill="url(#blastIn)" transform="translate(513 445) scale(.64) rotate(6) translate(-511 -445)"/>
  <polygon points=${burst} fill="#fff6c8" transform="translate(513 442) scale(.36) rotate(22) translate(-511 -445)"/>
  <circle cx="513" cy="441" r="16" fill="#fff"/>`;

const sunSmallCloud = svg`${sun(148, 448)}${cloud(-139, 179, 0.7)}`;

const rainCloud = svg`${cloud(1, -32)}
  ${[[386, 505], [462, 511], [535, 506], [416, 543], [499, 545]].map(([x, y]) => drop(x, y, 0.95))}`;

const emojis: Emoji[] = [
  { name: "Seta", art: mushroom }, { name: "Ramo de flores", art: bouquet }, { name: "Hibisco", art: hibiscus },
  { name: "Luna llena con cara", art: fullMoonFace }, { name: "Luna gibosa menguante", art: gibbousWaning },
  { name: "Cuarto creciente", art: firstQuarter }, { name: "Globo con Asia y Australia", art: globeAsia },
  { name: "Chispas", art: sparkles }, { name: "Tornado", art: tornado }, { name: "Sol detrás de nube grande", art: sunBehindCloud },

  { name: "Caracola", art: shell }, { name: "Tulipán", art: tulip }, { name: "Flor de cerezo", art: cherryBlossom },
  { name: "Cuarto creciente con cara", art: quarterFaceRight }, { name: "Cuarto menguante", art: lastQuarter },
  { name: "Luna gibosa creciente", art: gibbousWaxing }, { name: "Planeta con anillo", art: saturn },
  { name: "Alto voltaje", art: bolt }, { name: "Arcoíris", art: rainbow }, { name: "Nube", art: cloud(0, 0) },

  { name: "Coral", art: coral }, { name: "Rosa", art: rose }, { name: "Flor", art: daisy },
  { name: "Cuarto menguante con cara", art: quarterFaceLeft }, { name: "Luna menguante", art: crescentWaning },
  { name: "Luna", art: crescentMoon }, { name: "Estrella mareada", art: dizzyStar }, { name: "Meteorito", art: comet },
  { name: "Sol", art: plainSun }, { name: "Sol detrás de nube con lluvia", art: sunRainCloud },

  { name: "Roca", art: rock }, { name: "Flor marchita", art: wiltedRose }, { name: "Girasol", art: sunflower },
  { name: "Luna nueva con cara", art: newMoonFace }, { name: "Luna nueva", art: newMoon },
  { name: "Globo con América", art: globeAmericas }, { name: "Estrella", art: star }, { name: "Colisión", art: collision },
  { name: "Sol detrás de nube", art: sunSmallCloud }, { name: "Nube con lluvia", art: rainCloud },
];

/* Origin of each column and row on the sheet the drawings share; every tile is 240 units square. */
const sheetX = [45, 361, 678, 35, 352, 669, 56, 373, 29, 346];
const sheetY = [21, 321, 21, 321];
const tile = (i: number) => `${sheetX[i % 10]} ${sheetY[Math.floor(i / 10)]} 240 240`;

@customElement("app-root")
export class AppRoot extends LitElement {
  static styles = css`
    :host {
      display: flex;
      flex-direction: column;
      min-height: 100vh;
      background: #000;
      font-family: Inter, Roboto, "Liberation Sans", sans-serif;
    }
    button { border: 0; padding: 0; background: none; cursor: pointer; }
    .defs { position: absolute; width: 0; height: 0; }
    .note {
      flex: 1;
      display: flex;
      flex-direction: column;
    }
    .brand {
      display: flex;
      justify-content: flex-end;
      margin: 8px 4px 0 0;
      font: 900 23px/25px Roboto, "DejaVu Sans Condensed", sans-serif;
      color: #97d91e;
      -webkit-text-stroke: 1px currentColor;
    }
    .brand mark { background: #97d91e; color: #000; padding: 0 1px; margin-right: 2px; }
    .quote {
      margin: 278px 100px 0 161px;
      font-size: 41px;
      font-weight: 600;
      line-height: 61px;
      color: #e0e0e0;
    }
    .add {
      display: grid;
      place-items: center;
      width: 111px;
      height: 111px;
      margin: auto 40px 40px auto;
      border-radius: 50%;
      background: linear-gradient(#5b5f67, #45494f);
    }
    .add svg { width: 41px; height: 41px; }
    .panel { background: #2b2b2b; padding: 25px 0 8px; }
    .search {
      display: flex;
      align-items: center;
      gap: 28px;
      height: 92px;
      margin: 0 20px;
      padding: 0 28px;
      border-radius: 28px;
      background: #454545;
    }
    .search svg { width: 46px; height: 46px; flex: none; }
    .search input {
      flex: 1;
      min-width: 0;
      border: 0;
      padding: 2px 0 0;
      outline: 0;
      background: none;
      font: 600 41px/60px Inter, Roboto, sans-serif;
      color: #e0e0e0;
    }
    .search input::placeholder { color: #9b9b9b; opacity: 1; }
    .title {
      margin: 19px 30px 11px;
      font-size: 33px;
      font-weight: 800;
      line-height: 40px;
      color: #929292;
    }
    .grid {
      display: grid;
      grid-template-columns: repeat(10, 1fr);
      row-gap: 20px;
      padding: 0 12px;
    }
    .emoji { display: grid; place-items: center; }
    .emoji svg { display: block; width: 80px; height: 80px; overflow: visible; }
  `;

  render() {
    return html`
      <svg class="defs" aria-hidden="true"><defs>${defs}</defs></svg>
      <section class="note">
        <div class="brand"><mark>GETHU</mark><span>CINEMA</span></div>
        <p class="quote">1.LA GRATITUD ES LA FLOR MÁS BELLA QUE BROTA DEL ALMA.</p>
        <button class="add" aria-label="Añadir">
          <svg viewBox="0 0 41 41" stroke="#fff" stroke-width="5" stroke-linecap="round"><path d="M20.5 3V38M3 20.5H38"/></svg>
        </button>
      </section>
      <section class="panel">
        <label class="search">
          <svg viewBox="0 0 46 46" fill="none" stroke="#9b9b9b" aria-hidden="true">
            <circle cx="19.500" cy="20" r="15" stroke-width="5"/><path d="M30.5 31L40.5 41" stroke-width="6.500" stroke-linecap="round"/>
          </svg>
          <input type="search" placeholder="Buscar emoji" aria-label="Buscar emoji" />
        </label>
        <h2 class="title">ANIMALES Y NATURALEZA</h2>
        <div class="grid">
          ${emojis.map((e, i) => html`
            <button class="emoji" aria-label=${e.name}><svg viewBox=${tile(i)} aria-hidden="true">${e.art}</svg></button>`)}
        </div>
      </section>
    `;
  }
}
